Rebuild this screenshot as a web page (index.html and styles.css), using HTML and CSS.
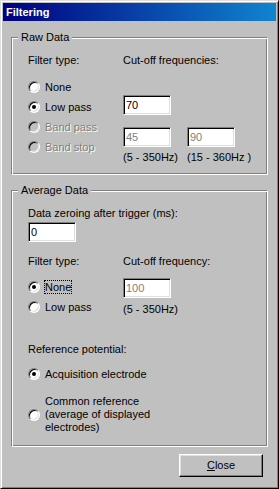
FILE: index.html
```html
<!DOCTYPE html>
<html lang="en">
<head>
    <meta charset="UTF-8">
    <title>Filtering</title>
    <link rel="stylesheet" href="styles.css">
</head>
<body>
    <div class="window">
        <div class="titlebar">Filtering</div>
        <div class="content">

            <!-- Raw data -->
            <fieldset class="group">
                <legend>Raw Data</legend>
                <div class="cols">
                    <div class="col-left">
                        <div class="label">Filter type:</div>
                        <div class="radios">
                            <div class="radio-row"><span class="radio"></span><span class="radio-text">None</span></div>
                            <div class="radio-row"><span class="radio checked"></span><span class="radio-text">Low pass</span></div>
                            <div class="radio-row"><span class="radio disabled"></span><span class="radio-text disabled">Band pass</span></div>
                            <div class="radio-row"><span class="radio disabled"></span><span class="radio-text disabled">Band stop</span></div>
                        </div>
                    </div>
                    <div class="col-right">
                        <div class="label">Cut-off frequencies:</div>
                        <input class="edit edit-low" type="text" value="70">
                        <div class="edit-row">
                            <input class="edit" type="text" value="45" disabled>
                            <input class="edit" type="text" value="90" disabled>
                        </div>
                        <div class="range-row">
                            <span class="range-first">(5 - 350Hz)</span>
                            <span>(15 - 360Hz )</span>
                        </div>
                    </div>
                </div>
            </fieldset>

            <!-- Average data -->
            <fieldset class="group group-avg">
                <legend>Average Data</legend>
                <div class="label">Data zeroing after trigger (ms):</div>
                <input class="edit edit-zero" type="text" value="0">
                <div class="cols cols-avg">
                    <div class="col-left">
                        <div class="label">Filter type:</div>
                        <div class="radios radios-avg">
                            <div class="radio-row"><span class="radio checked"></span><span class="radio-text focus">None</span></div>
                            <div class="radio-row"><span class="radio"></span><span class="radio-text">Low pass</span></div>
                        </div>
                    </div>
                    <div class="col-right">
                        <div class="label">Cut-off frequency:</div>
                        <input class="edit edit-avg" type="text" value="100" disabled>
                        <div class="range-row range-avg">(5 - 350Hz)</div>
                    </div>
                </div>
                <div class="label ref-label">Reference potential:</div>
                <div class="radio-row ref-first"><span class="radio checked"></span><span class="radio-text">Acquisition electrode</span></div>
                <div class="radio-row ref-common"><span class="radio"></span><span class="radio-text multi">Common reference<br>(average of displayed<br>electrodes)</span></div>
            </fieldset>

            <div class="footer">
                <button class="button"><u>C</u>lose</button>
            </div>
        </div>
    </div>
</body>
</html>
```

FILE: styles.css
```css
body {
    margin: 0;
    font-family: "Liberation Sans", Arial, sans-serif;
    font-size: 11px;
    line-height: 13px;
    color: #000;
    background: #c0c0c0;
}
.window {
    box-sizing: border-box;
    width: 279px;
    height: 489px;
    padding: 2px;
    border: 1px solid;
    border-color: #dfdfdf #000 #000 #dfdfdf;
    box-shadow: inset 1px 1px #fff, inset -1px -1px #808080;
    background: #c0c0c0;
}
.titlebar {
    height: 18px;
    line-height: 18px;
    padding-left: 3px;
    background: linear-gradient(90deg, #000080, #1084d0);
    color: #fff;
    font-weight: bold;
}
.content {
    padding: 0 8px;
}

/* group boxes */
.group {
    margin: 10px 0 0;
    padding: 10px 0 10px 16px;
    min-width: 0;
    border: 1px solid;
    border-color: #808080 #fff #fff #808080;
    box-shadow: inset 1px 1px #fff, inset -1px -1px #808080;
}
.group legend {
    margin-left: -10px;
    padding: 0 3px;
    line-height: 13px;
    background: #c0c0c0;
}
.group-avg {
    margin-top: 9px;
    padding-bottom: 11px;
}
.cols {
    display: flex;
}
.col-left {
    width: 95px;
}
.radios {
    margin-top: 10px;
}
.radios-avg {
    margin-top: 9px;
}

/* radio buttons */
.radio-row {
    display: flex;
    align-items: center;
    height: 20px;
}
.radio {
    position: relative;
    flex: none;
    box-sizing: border-box;
    width: 12px;
    height: 12px;
    border-radius: 50%;
    border: 1px solid;
    border-color: #808080 #fff #fff #808080;
    box-shadow: inset 1px 1px #000, inset -1px -1px #dfdfdf;
    background: #fff;
}
.radio.checked::after {
    content: "";
    position: absolute;
    left: 3px;
    top: 3px;
    width: 4px;
    height: 4px;
    border-radius: 50%;
    background: #000;
}
.radio.disabled {
    background: #c0c0c0;
}
.radio-text {
    margin-left: 4px;
    border: 1px solid transparent;
    line-height: 12px;
}
.radio-text.multi {
    line-height: 13px;
}
.radio-text.focus {
    border: 1px dotted #000;
}
.disabled {
    color: #808080;
    text-shadow: 1px 1px #fff;
}

/* edit boxes */
.edit {
    display: block;
    box-sizing: border-box;
    width: 48px;
    height: 20px;
    margin: 0;
    padding: 0 2px;
    border: 1px solid;
    border-color: #808080 #fff #fff #808080;
    box-shadow: inset 1px 1px #000, inset -1px -1px #dfdfdf;
    background: #fff;
    font: inherit;
    color: #000;
    outline: none;
}
.edit:disabled {
    color: #808080;
    background: #fff;
}
.edit-low {
    margin-top: 28px;
}
.edit-row {
    display: flex;
    gap: 16px;
    margin-top: 12px;
}
.range-row {
    display: flex;
    margin-top: 4px;
}
.range-first {
    width: 64px;
}
.edit-zero {
    margin-top: 2px;
}
.cols-avg {
    margin-top: 13px;
}
.edit-avg {
    margin-top: 10px;
}
.range-avg {
    margin-top: 5px;
}
.ref-label {
    margin-top: 26px;
}
.ref-first {
    margin-top: 8px;
}
.ref-common {
    height: auto;
    margin-top: 10px;
}

/* close button */
.footer {
    display: flex;
    justify-content: flex-end;
    margin-top: 7px;
    padding-right: 5px;
}
.button {
    box-sizing: border-box;
    width: 84px;
    height: 23px;
    padding: 0;
    border: 1px solid;
    border-color: #fff #000 #000 #fff;
    box-shadow: inset -1px -1px #808080, inset 1px 1px #dfdfdf;
    background: #c0c0c0;
    font: inherit;
    color: #000;
}
```
